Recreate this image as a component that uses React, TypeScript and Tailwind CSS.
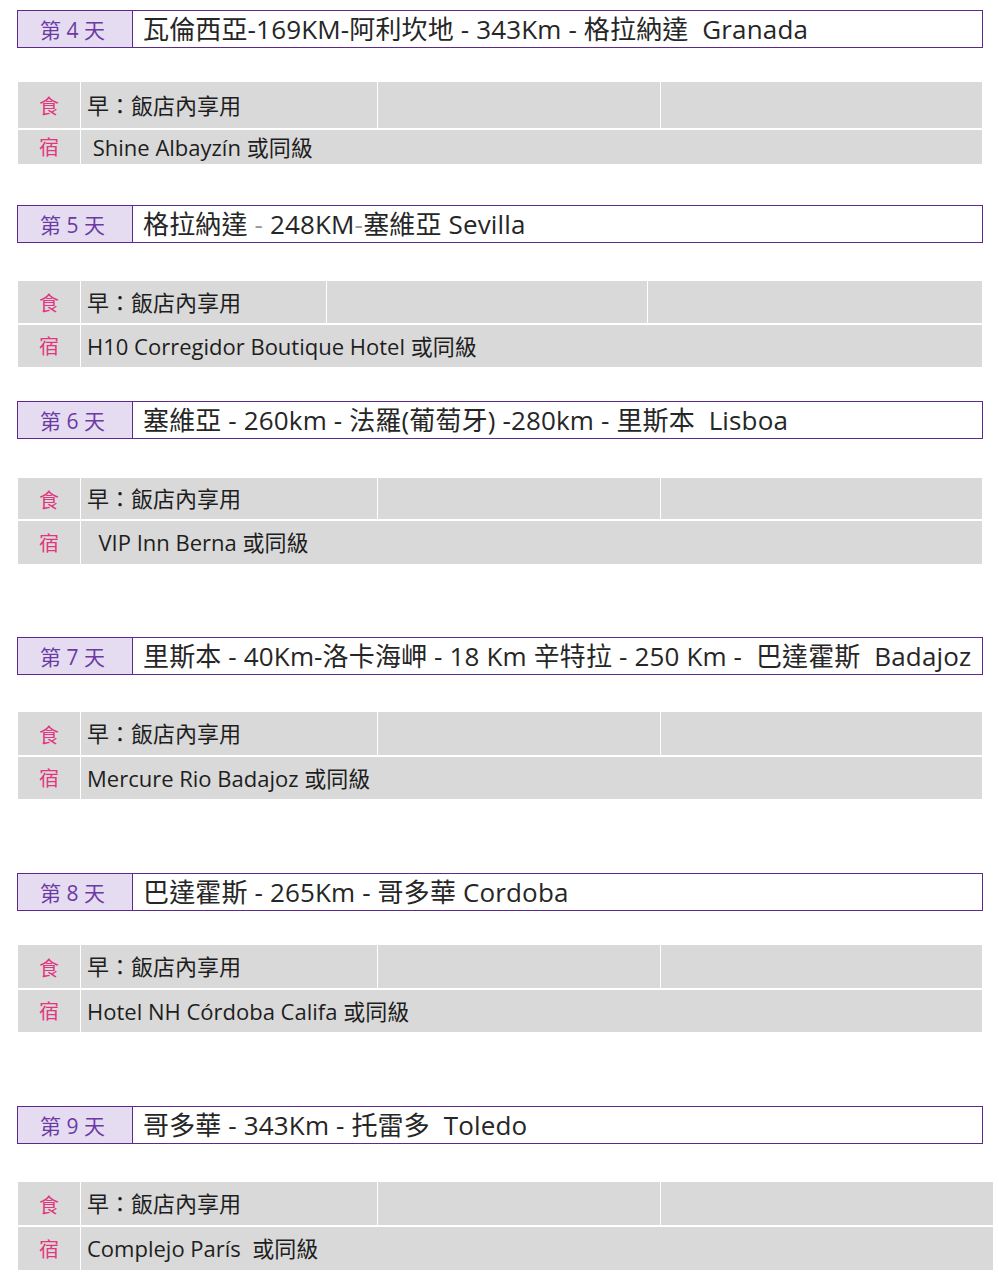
import React from 'react'

interface Day {
  n: number
  route: React.ReactNode
  hotel: string
  mt: number
  gap: number
  r1: number
  r2: number
  c2: number
  c3: number
  right: number
}

const days: Day[] = [
  {
    n: 4,
    route: '瓦倫西亞-169KM-阿利坎地 - 343Km - 格拉納達  Granada',
    hotel: '\u00a0Shine Albayzín 或同級',
    mt: 10, gap: 34, r1: 46, r2: 34, c2: 296, c3: 282, right: 982,
  },
  {
    n: 5,
    route: (
      <>
        格拉納達 <span className="text-[#999]">-</span> 248KM<span className="text-[#999]">-</span>塞維亞 Sevilla
      </>
    ),
    hotel: 'H10 Corregidor Boutique Hotel 或同級',
    mt: 41, gap: 38, r1: 42, r2: 42, c2: 245, c3: 320, right: 982,
  },
  {
    n: 6,
    route: '塞維亞 - 260km - 法羅(葡萄牙) -280km - 里斯本  Lisboa',
    hotel: '\u00a0\u00a0VIP Inn Berna 或同級',
    mt: 34, gap: 39, r1: 41, r2: 43, c2: 296, c3: 282, right: 982,
  },
  {
    n: 7,
    route: '里斯本 - 40Km-洛卡海岬 - 18 Km 辛特拉 - 250 Km -  巴達霍斯  Badajoz',
    hotel: 'Mercure Rio Badajoz 或同級',
    mt: 73, gap: 37, r1: 43, r2: 42, c2: 296, c3: 282, right: 982,
  },
  {
    n: 8,
    route: '巴達霍斯 - 265Km - 哥多華 Cordoba',
    hotel: 'Hotel NH Córdoba Califa 或同級',
    mt: 74, gap: 34, r1: 43, r2: 42, c2: 296, c3: 282, right: 982,
  },
  {
    n: 9,
    route: '哥多華 - 343Km - 托雷多  Toledo',
    hotel: 'Complejo París  或同級',
    mt: 74, gap: 38, r1: 43, r2: 43, c2: 296, c3: 282, right: 993,
  },
]

function DayBlock({ d }: { d: Day }) {
  return (
    <div style={{ marginTop: d.mt }}>
      {/* day header */}
      <div className="flex h-[38px] w-[966px] border border-[#5b2a8c] bg-white">
        <div className="flex w-[115px] shrink-0 items-center justify-center border-r border-[#5b2a8c] bg-[#e6dcf2] pr-[5px] pt-[3px] text-[21px] text-[#6b3aa3]">
          第 {d.n} 天
        </div>
        <div className="flex items-center whitespace-pre pl-[10px] text-[26px] tracking-[0.15px] text-[#262626]">
          {d.route}
        </div>
      </div>

      {/* meals / hotel */}
      <div
        className="flex flex-col gap-[2px] pl-px text-[22px] text-[#1e1e1e]"
        style={{ marginTop: d.gap, width: d.right - 17 }}
      >
        <div className="flex gap-px" style={{ height: d.r1 }}>
          <div className="flex w-[62px] shrink-0 items-center justify-center bg-[#d9d9d9] pt-[4px] text-[20px] text-[#e2357f]">
            食
          </div>
          <div className="flex shrink-0 items-center bg-[#d9d9d9] pl-[6px]" style={{ width: d.c2 }}>
            早：飯店內享用
          </div>
          <div className="shrink-0 bg-[#d9d9d9]" style={{ width: d.c3 }} />
          <div className="flex-1 bg-[#d9d9d9]" />
        </div>
        <div className="flex gap-px" style={{ height: d.r2 }}>
          <div className="flex w-[62px] shrink-0 items-center justify-center bg-[#d9d9d9] pt-[2px] text-[20px] text-[#e2357f]">
            宿
          </div>
          <div className="flex flex-1 items-center whitespace-pre bg-[#d9d9d9] pl-[6px]">
            {d.hotel}
          </div>
        </div>
      </div>
    </div>
  )
}

export default function App() {
  return (
    <div
      className="h-[1279px] w-[999px] overflow-hidden bg-white pl-[17px]"
      style={{ fontFamily: '"Open Sans", "Noto Sans CJK TC", sans-serif' }}
    >
      <div className="flex flex-col">
        {days.map(d => (
          <DayBlock key={d.n} d={d} />
        ))}
      </div>
    </div>
  )
}
